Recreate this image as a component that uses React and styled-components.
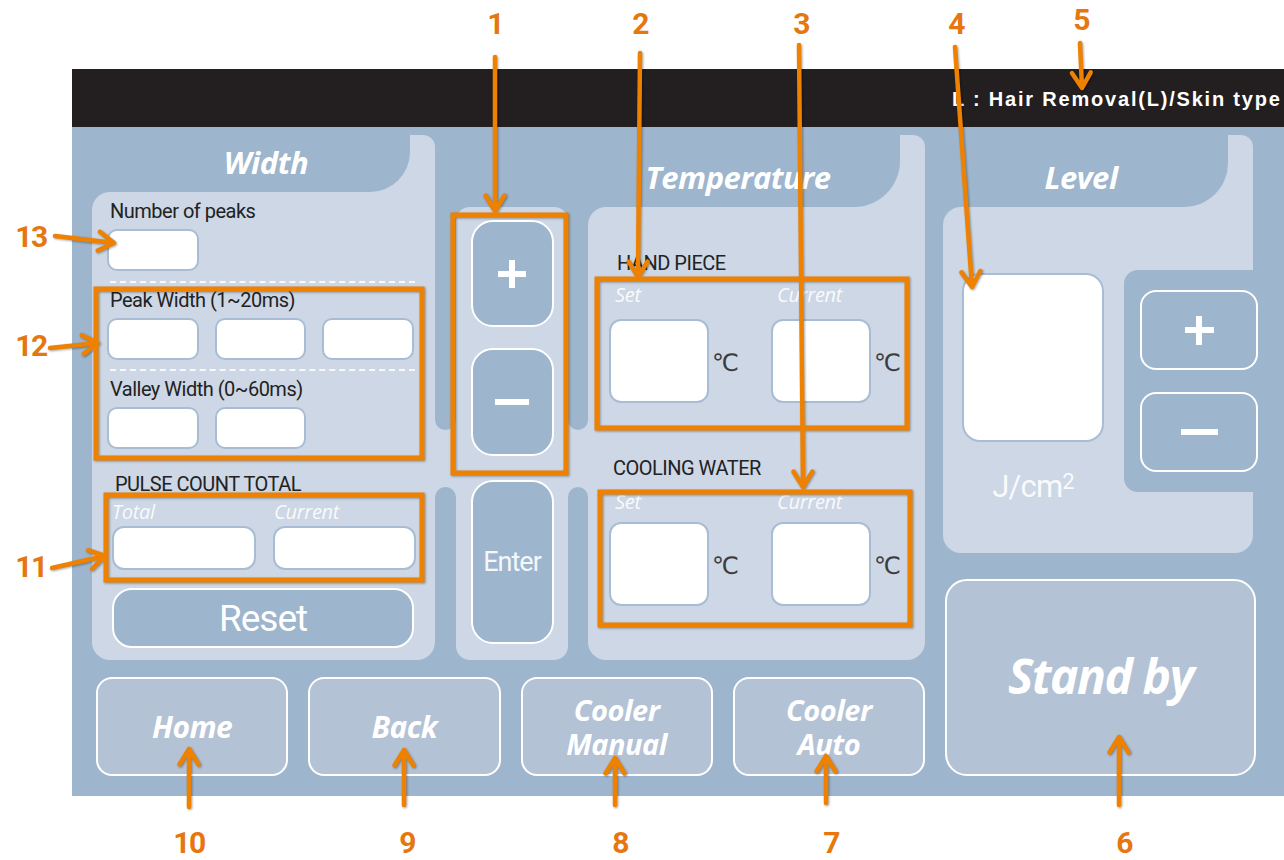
import React from 'react';
import styled, { createGlobalStyle } from 'styled-components';

const BLUE = '#9db5cd';
const LIGHT = '#cdd7e5';
const ORANGE = '#ee8100';

const GlobalStyle = createGlobalStyle`
  html, body { margin: 0; padding: 0; background: #fff; }
  body { font-family: Roboto, "Liberation Sans", sans-serif; }
`;

const Page = styled.div`
  position: relative;
  width: 1284px;
  height: 860px;
  overflow: hidden;
  padding: 69px 0 0 72px;
  box-sizing: border-box;
`;

const Device = styled.div`
  width: 1212px;
  display: flex;
  flex-direction: column;
`;

const StatusBar = styled.div`
  height: 58px;
  background: #231f20;
  display: flex;
  align-items: center;
  box-sizing: border-box;
  padding: 2px 0 0 880px;
  color: #fff;
  font-family: "Liberation Sans", Arial, sans-serif;
  font-weight: bold;
  font-size: 20px;
  letter-spacing: 1.8px;
  white-space: nowrap;
  overflow: hidden;
`;

const Screen = styled.div`
  height: 669px;
  background: ${BLUE};
  box-sizing: border-box;
  padding: 8px 0 0 20px;
  display: grid;
  grid-template-columns: 833px 315px;
  column-gap: 18px;
  align-items: start;
`;

const LeftArea = styled.div`
  display: flex;
  flex-direction: column;
`;

const PanelsRow = styled.div`
  height: 525px;
  display: flex;
`;

const Panel = styled.div`
  width: ${p => p.$w}px;
  display: flex;
  flex-direction: column;
`;

const PanelHead = styled.div`
  height: ${p => p.$h}px;
  display: flex;
  background: ${LIGHT};
  border-top-right-radius: 12px;
`;

const Title = styled.div`
  flex: 1;
  background: ${BLUE};
  border-bottom-right-radius: ${p => p.$fillet}px;
  box-sizing: border-box;
  padding: ${p => p.$top}px ${p => p.$pr || 0}px 0 ${p => p.$pl || 0}px;
  text-align: center;
  color: #fff;
  font-family: "Open Sans", "Noto Sans", sans-serif;
  font-weight: 700;
  font-style: italic;
  font-size: 31px;
  line-height: 40px;
  letter-spacing: -0.5px;
`;

const Tab = styled.div`
  width: 25px;
`;

const PanelBody = styled.div`
  flex: ${p => (p.$h ? 'none' : 1)};
  height: ${p => (p.$h ? `${p.$h}px` : 'auto')};
  background: ${LIGHT};
  border-radius: 18px 0 18px 18px;
  display: flex;
  flex-direction: ${p => (p.$row ? 'row' : 'column')};
  box-sizing: border-box;
  padding: ${p => p.$pad || '0'};
`;

const Label = styled.div`
  margin: ${p => p.$mt || 0}px 0 0 ${p => p.$ml || 0}px;
  font-size: 20px;
  line-height: 22px;
  color: #222;
  letter-spacing: -0.5px;
  white-space: nowrap;
`;

const Hint = styled.div`
  margin-left: ${p => p.$ml || 0}px;
  font-family: "Open Sans", "Noto Sans", sans-serif;
  font-style: italic;
  font-size: 20px;
  line-height: 22px;
  color: rgba(255, 255, 255, 0.9);
  letter-spacing: -0.3px;
`;

const Field = styled.div`
  width: ${p => p.$w}px;
  height: ${p => p.$h}px;
  background: #fff;
  border: 2px solid #a8bdd4;
  border-radius: ${p => p.$r || 10}px;
  box-sizing: border-box;
`;

const FieldRow = styled.div`
  margin-top: ${p => p.$mt}px;
  display: flex;
  gap: 16px;
`;

const Dashed = styled.div`
  margin: ${p => p.$mt}px 0 0 3px;
  border-top: 2px dashed rgba(255, 255, 255, 0.85);
`;

const PulseGrid = styled.div`
  margin: 6px 0 0 5px;
  display: grid;
  grid-template-columns: 144px 143px;
  column-gap: 17px;
  row-gap: 3px;
`;

const ResetButton = styled.div`
  margin: 18px 0 0 5px;
  width: 302px;
  height: 60px;
  box-sizing: border-box;
  background: ${BLUE};
  border: 2px solid #fff;
  border-radius: 20px;
  display: flex;
  align-items: center;
  justify-content: center;
  color: #fff;
  font-size: 37px;
  letter-spacing: -1px;
`;

/* middle key column */
const Middle = styled.div`
  width: 153px;
  height: 453px;
  margin-top: 72px;
  display: flex;
`;

const SideRail = styled.div`
  width: ${p => p.$w}px;
  display: flex;
  flex-direction: column;
  background: ${LIGHT};
`;

const RailSlot = styled.div`
  background: ${BLUE};
  height: ${p => p.$h}px;
  border-radius: ${p => (p.$upper ? '0 0 11px 11px' : '11px 11px 0 0')};
  margin-top: ${p => (p.$upper ? 0 : 57)}px;
`;

const KeyColumn = styled.div`
  flex: 1;
  background: ${LIGHT};
  border-radius: 14px;
  display: flex;
  flex-direction: column;
  align-items: center;
  padding-top: 13px;
  box-sizing: border-box;
`;

const Key = styled.div`
  width: 83px;
  height: ${p => p.$h}px;
  margin-top: ${p => p.$mt || 0}px;
  box-sizing: border-box;
  background: ${BLUE};
  border: 2px solid #fff;
  border-radius: 22px;
  display: flex;
  align-items: center;
  justify-content: center;
  color: #f4f7fb;
  font-size: 27px;
  letter-spacing: -1px;
`;

const Glyph = styled.span`
  position: relative;
  width: ${p => p.$size}px;
  height: ${p => p.$size}px;
  &::before,
  &::after {
    content: '';
    position: absolute;
    background: #fff;
  }
  &::before {
    left: 0;
    right: 0;
    top: 50%;
    height: 6px;
    margin-top: -3px;
  }
  &::after {
    display: ${p => (p.$plus ? 'block' : 'none')};
    top: 0;
    bottom: 0;
    left: 50%;
    width: 6px;
    margin-left: -3px;
  }
`;

/* temperature */
const TempRow = styled.div`
  margin-top: ${p => p.$mt}px;
  display: grid;
  grid-template-columns: 162px 1fr;
  padding-left: 21px;
`;

const TempCell = styled.div`
  display: flex;
  flex-direction: column;
`;

const TempBoxLine = styled.div`
  margin-top: ${p => p.$mt}px;
  display: flex;
  align-items: center;
`;

const Celsius = styled.span`
  margin: 4px 0 0 3px;
  font-family: "DejaVu Sans", sans-serif;
  font-size: 24px;
  color: #3c3c3c;
`;

/* level */
const RightColumn = styled.div`
  display: flex;
  flex-direction: column;
`;

const LevelDisplay = styled.div`
  display: flex;
  flex-direction: column;
  align-items: center;
  padding: 66px 0 0 19px;
`;

const Unit = styled.div`
  margin-top: 30px;
  font-size: 31px;
  line-height: 30px;
  color: rgba(255, 255, 255, 0.9);
  letter-spacing: -0.8px;
  sup {
    font-size: 22px;
    vertical-align: top;
    line-height: 20px;
  }
`;

const StepPad = styled.div`
  margin: 63px 0 0 20px;
  width: 129px;
  height: 222px;
  background: ${BLUE};
  border-radius: 14px 0 0 14px;
  display: flex;
  flex-direction: column;
  gap: 22px;
  padding: 20px 0 0 16px;
  box-sizing: border-box;
`;

const StepKey = styled.div`
  width: 118px;
  height: 80px;
  margin-right: -5px;
  box-sizing: border-box;
  border: 2px solid #fff;
  border-radius: 16px;
  display: flex;
  align-items: center;
  justify-content: center;
`;

const ActionButton = styled.div`
  box-sizing: border-box;
  height: ${p => p.$h}px;
  background: #b4c2d5;
  border: 2px solid #fff;
  border-radius: ${p => p.$r}px;
  display: flex;
  flex-direction: column;
  align-items: center;
  justify-content: center;
  text-align: center;
  color: #fff;
  font-family: "Open Sans", "Noto Sans", sans-serif;
  font-weight: 700;
  font-style: italic;
  font-size: ${p => p.$fs}px;
  line-height: ${p => p.$lh || 40}px;
  letter-spacing: ${p => p.$ls || -0.5}px;
`;

const ButtonLine = styled.span`
  display: block;
  height: 34px;
  line-height: 34px;
`;

const ButtonRow = styled.div`
  margin-top: 17px;
  padding-left: 4px;
  display: grid;
  grid-template-columns: repeat(4, 1fr);
  column-gap: 20px;
`;

const StandBy = styled(ActionButton)`
  margin: 26px 0 0 2px;
  width: 311px;
  padding-bottom: 4px;
`;

/* annotation layer */
const Marks = styled.svg`
  position: absolute;
  left: 0;
  top: 0;
  pointer-events: none;
  filter: drop-shadow(1px 1px 1px rgba(0, 0, 0, 0.35));
`;

const Callout = styled.div`
  position: absolute;
  left: ${p => p.$x}px;
  top: ${p => p.$y}px;
  transform: translate(-50%, -50%);
  color: #e6770f;
  font-family: Roboto, "Liberation Sans", sans-serif;
  font-weight: 700;
  font-size: 30px;
  line-height: 34px;
  letter-spacing: -1.5px;
  white-space: nowrap;
`;

const boxes = [
  [453, 215, 113, 258],
  [597, 279, 310, 149],
  [600, 492, 310, 133],
  [96, 289, 326, 169],
  [106, 495, 316, 85],
];

const arrows = [
  [[495, 57], [495, 211]],
  [[640, 53], [638, 277]],
  [[799, 45], [803, 487]],
  [[955, 47], [972, 287]],
  [[1080, 43], [1082, 88]],
  [[1119, 805], [1119, 737]],
  [[826, 803], [826, 756]],
  [[615, 805], [615, 758]],
  [[404, 805], [404, 750]],
  [[189, 807], [189, 749]],
  [[52, 568], [105, 556]],
  [[50, 348], [98, 343]],
  [[55, 236], [114, 243]],
];

const callouts = [
  ['1', 495, 24], ['2', 640, 24], ['3', 801, 24], ['4', 956, 24], ['5', 1081, 20],
  ['13', 31, 237], ['12', 31, 346], ['11', 31, 567],
  ['10', 189, 843], ['9', 407, 843], ['8', 620, 843], ['7', 831, 843], ['6', 1124, 843],
];

const arrowPath = ([x1, y1], [x2, y2]) => {
  const a = Math.atan2(y2 - y1, x2 - x1);
  const len = 18;
  const spread = 0.55;
  const h1 = [x2 - len * Math.cos(a - spread), y2 - len * Math.sin(a - spread)].map(v => v.toFixed(1));
  const h2 = [x2 - len * Math.cos(a + spread), y2 - len * Math.sin(a + spread)].map(v => v.toFixed(1));
  return `M${x1} ${y1}L${x2} ${y2}M${h1[0]} ${h1[1]}L${x2} ${y2}L${h2[0]} ${h2[1]}`;
};

const Annotations = () => (
  <>
    <Marks width="1284" height="860" viewBox="0 0 1284 860">
      <g fill="none" stroke={ORANGE} strokeWidth="5">
        {boxes.map(([x, y, w, h], i) => <rect key={i} x={x} y={y} width={w} height={h} />)}
      </g>
      <g fill="none" stroke={ORANGE} strokeWidth="4.5" strokeLinecap="round" strokeLinejoin="round">
        {arrows.map(([a, b], i) => <path key={i} d={arrowPath(a, b)} />)}
      </g>
    </Marks>
    {callouts.map(([t, x, y]) => <Callout key={t} $x={x} $y={y}>{t}</Callout>)}
  </>
);

const TempGroup = ({ title, labelTop, titleIndent, hintTop, boxTop }) => (
  <>
    <Label $mt={labelTop} $ml={titleIndent}>{title}</Label>
    <TempRow $mt={hintTop}>
      {['Set', 'Current'].map(h => (
        <TempCell key={h}>
          <Hint $ml={6}>{h}</Hint>
          <TempBoxLine $mt={boxTop}>
            <Field $w={100} $h={84} $r={12} />
            <Celsius>℃</Celsius>
          </TempBoxLine>
        </TempCell>
      ))}
    </TempRow>
  </>
);

export default function App() {
  return (
    <Page>
      <GlobalStyle />
      <Device>
        <StatusBar>L : Hair Removal(L)/Skin type</StatusBar>
        <Screen>
          <LeftArea>
            <PanelsRow>
              <Panel $w={343}>
                <PanelHead $h={57}>
                  <Title $fillet={40} $top={7} $pl={30}>Width</Title>
                  <Tab />
                </PanelHead>
                <PanelBody $pad="8px 20px 12px 15px">
                  <Label $ml={3}>Number of peaks</Label>
                  <FieldRow $mt={7}>
                    <Field $w={92} $h={42} />
                  </FieldRow>
                  <Dashed $mt={10} />
                  <Label $mt={6} $ml={3}>Peak Width (1~20ms)</Label>
                  <FieldRow $mt={7}>
                    <Field $w={92} $h={42} />
                    <Field $w={91} $h={42} />
                    <Field $w={92} $h={42} />
                  </FieldRow>
                  <Dashed $mt={9} />
                  <Label $mt={7} $ml={3}>Valley Width (0~60ms)</Label>
                  <FieldRow $mt={7}>
                    <Field $w={92} $h={42} />
                    <Field $w={91} $h={42} />
                  </FieldRow>
                  <Label $mt={24} $ml={8}>PULSE COUNT TOTAL</Label>
                  <PulseGrid>
                    <Hint>Total</Hint>
                    <Hint $ml={1}>Current</Hint>
                    <Field $w={144} $h={44} $r={12} />
                    <Field $w={143} $h={44} $r={12} />
                  </PulseGrid>
                  <ResetButton>Reset</ResetButton>
                </PanelBody>
              </Panel>

              <Middle>
                <SideRail $w={21}>
                  <RailSlot $upper $h={223} />
                  <RailSlot $h={173} />
                </SideRail>
                <KeyColumn>
                  <Key $h={107}><Glyph $plus $size={28} /></Key>
                  <Key $h={108} $mt={21}><Glyph $size={34} /></Key>
                  <Key $h={164} $mt={24}>Enter</Key>
                </KeyColumn>
                <SideRail $w={20}>
                  <RailSlot $upper $h={223} />
                  <RailSlot $h={173} />
                </SideRail>
              </Middle>

              <Panel $w={337}>
                <PanelHead $h={72}>
                  <Title $fillet={46} $top={22} $pr={12}>Temperature</Title>
                  <Tab />
                </PanelHead>
                <PanelBody>
                  <TempGroup title="HAND PIECE" labelTop={45} titleIndent={29} hintTop={10} boxTop={13} />
                  <TempGroup title="COOLING WATER" labelTop={54} titleIndent={25} hintTop={12} boxTop={9} />
                </PanelBody>
              </Panel>
            </PanelsRow>

            <ButtonRow>
              <ActionButton $h={99} $r={16} $fs={30}>Home</ActionButton>
              <ActionButton $h={99} $r={16} $fs={30}>Back</ActionButton>
              <ActionButton $h={99} $r={16} $fs={29}>
                <ButtonLine>Cooler</ButtonLine>
                <ButtonLine>Manual</ButtonLine>
              </ActionButton>
              <ActionButton $h={99} $r={16} $fs={29}>
                <ButtonLine>Cooler</ButtonLine>
                <ButtonLine>Auto</ButtonLine>
              </ActionButton>
            </ButtonRow>
          </LeftArea>

          <RightColumn>
            <Panel $w={310}>
              <PanelHead $h={72}>
                <Title $fillet={44} $top={22} $pr={9}>Level</Title>
                <Tab />
              </PanelHead>
              <PanelBody $row $h={346}>
                <LevelDisplay>
                  <Field $w={142} $h={169} $r={18} />
                  <Unit>J/cm<sup>2</sup></Unit>
                </LevelDisplay>
                <StepPad>
                  <StepKey><Glyph $plus $size={29} /></StepKey>
                  <StepKey><Glyph $size={37} /></StepKey>
                </StepPad>
              </PanelBody>
            </Panel>
            <StandBy $h={197} $r={22} $fs={48} $lh={60} $ls={-1.5}>Stand by</StandBy>
          </RightColumn>
        </Screen>
      </Device>
      <Annotations />
    </Page>
  );
}
